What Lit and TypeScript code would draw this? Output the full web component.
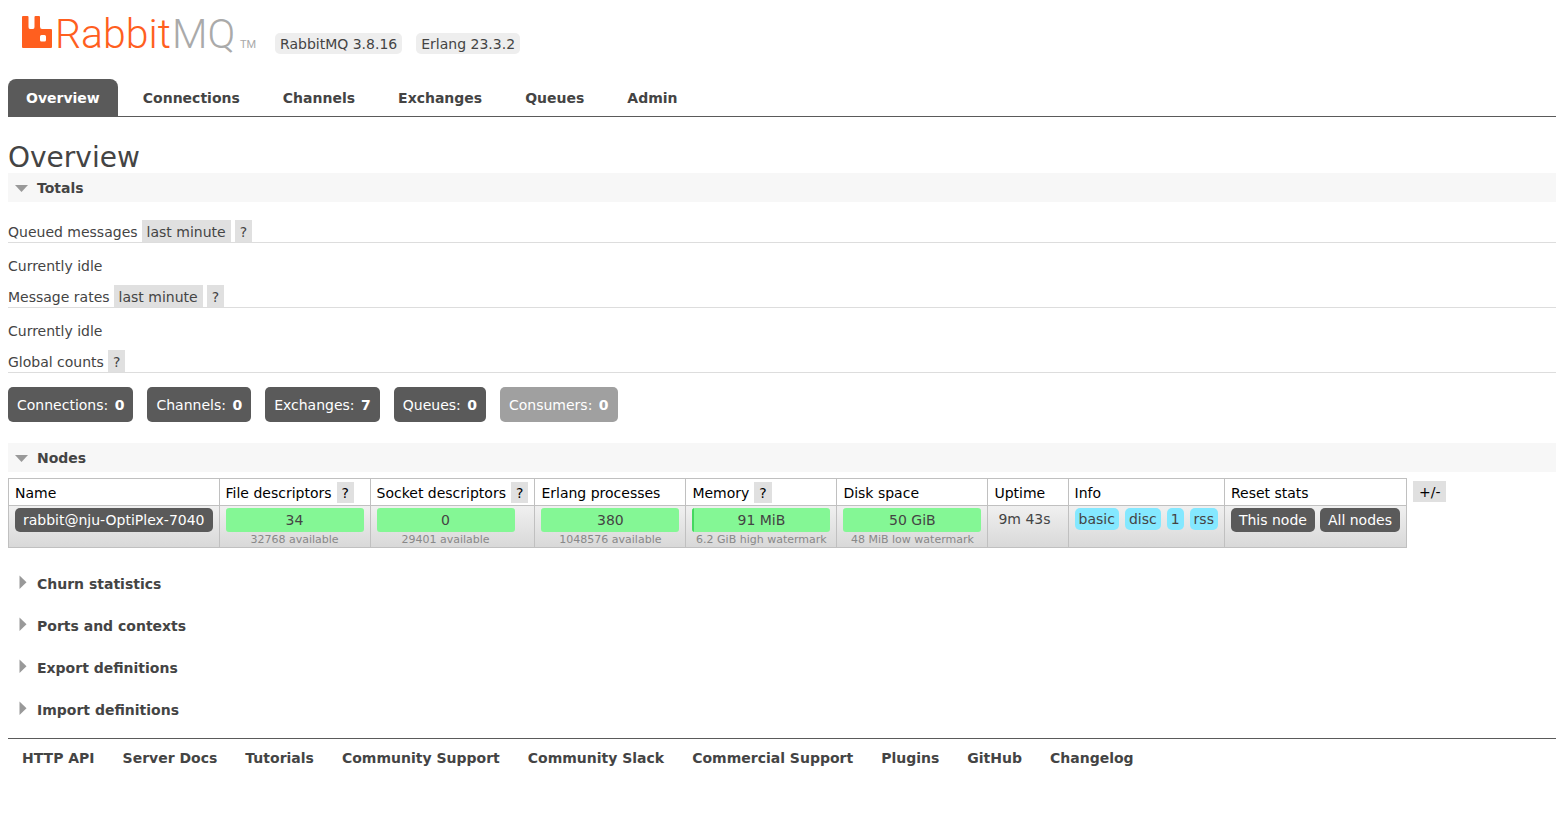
import { LitElement, html, css, svg } from "lit";
import { customElement, property } from "lit/decorators.js";

interface Meter {
  value: string;
  note: string;
  used: number;
}

const TABS = ["Overview", "Connections", "Channels", "Exchanges", "Queues", "Admin"];

const COUNTS = [
  { name: "Connections", count: 0 },
  { name: "Channels", count: 0 },
  { name: "Exchanges", count: 7 },
  { name: "Queues", count: 0 },
  { name: "Consumers", count: 0, disabled: true },
];

const COLUMNS = [
  { label: "Name" },
  { label: "File descriptors", help: true },
  { label: "Socket descriptors", help: true },
  { label: "Erlang processes" },
  { label: "Memory", help: true },
  { label: "Disk space" },
  { label: "Uptime" },
  { label: "Info" },
  { label: "Reset stats" },
];

const METERS: Meter[] = [
  { value: "34", note: "32768 available", used: 0 },
  { value: "0", note: "29401 available", used: 0 },
  { value: "380", note: "1048576 available", used: 0 },
  { value: "91 MiB", note: "6.2 GiB high watermark", used: 1.4 },
  { value: "50 GiB", note: "48 MiB low watermark", used: 0 },
];

const CLOSED_SECTIONS = [
  "Churn statistics",
  "Ports and contexts",
  "Export definitions",
  "Import definitions",
];

const FOOTER_LINKS = [
  "HTTP API",
  "Server Docs",
  "Tutorials",
  "Community Support",
  "Community Slack",
  "Commercial Support",
  "Plugins",
  "GitHub",
  "Changelog",
];

@customElement("section-heading")
export class SectionHeading extends LitElement {
  static styles = css`
    :host {
      display: block;
    }
    .heading {
      margin: 0;
      font-size: 14px;
      line-height: 19px;
    }
    .toggle {
      display: flex;
      align-items: center;
      gap: 9px;
      width: 100%;
      padding: 6px 7px 4px;
      border: 0;
      background: none;
      color: inherit;
      font: inherit;
      font-weight: bold;
      text-align: left;
      cursor: pointer;
    }
    .open {
      background: #f7f7f7;
    }
    .arrow {
      flex: none;
      width: 13px;
      height: 15px;
      overflow: visible;
      fill: #999;
    }
  `;

  @property() label = "";
  @property({ type: Boolean }) open = false;

  render() {
    return html`<h2 class="heading">
      <button class="toggle ${this.open ? "open" : ""}" aria-expanded=${this.open}>
        <svg class="arrow" viewBox="0 0 13 15" aria-hidden="true">
          ${this.open
            ? svg`<path d="M0 4h13L6.5 11z"></path>`
            : svg`<path d="M4.5 -1.500v13.500l7-6.700z"></path>`}
        </svg>
        ${this.label}
      </button>
    </h2>`;
  }
}

@customElement("app-root")
export class AppRoot extends LitElement {
  static styles = css`
    :host {
      display: block;
      padding: 8px 0 0 8px;
      color: #444;
      background: #fff;
      font: 14px/18px Verdana, "DejaVu Sans", sans-serif;
    }
    a {
      color: inherit;
      text-decoration: none;
    }
    button {
      border: 0;
      font: inherit;
      cursor: pointer;
    }
    .brand {
      display: flex;
      align-items: flex-end;
      gap: 14px;
      height: 46px;
      padding-left: 14px;
    }
    .logo {
      display: block;
      margin-right: 4px;
      width: 235px;
      height: 46px;
      overflow: visible;
    }
    .mark,
    .rabbit {
      fill: #ff5f1f;
    }
    .mq,
    .tm {
      fill: #aaa;
    }
    .rabbit,
    .mq {
      font: 300 41px "Roboto", sans-serif;
    }
    .tm {
      font: 11px "Roboto", sans-serif;
    }
    .version {
      padding: 2px 5px 1px;
      border-radius: 5px;
      background: #eee;
    }
    .tabs {
      display: flex;
      gap: 7px;
      margin-top: 25px;
      border-bottom: 1px solid #5a5a5a;
      font-weight: bold;
    }
    .tab {
      padding: 10px 18px 9px;
      border-radius: 8px 8px 0 0;
    }
    .selected {
      background: #5a5a5a;
      color: #fff;
    }
    .title {
      margin: 25px 0 0;
      font-size: 28px;
      font-weight: normal;
      line-height: 31px;
    }
    .stats {
      padding: 18px 0 21px;
    }
    .caption {
      display: flex;
      align-items: flex-end;
      gap: 4px;
      margin: 0;
      padding-top: 2px;
      border-bottom: 1px solid #ddd;
      font-size: 14px;
      font-weight: normal;
      line-height: 20px;
    }
    .chip {
      margin: -2px 0 0;
      padding: 2px 5px 0;
      background: #e0e0e0;
      color: inherit;
    }
    .idle {
      margin: 14px 0 10px;
    }
    .counts {
      display: flex;
      gap: 14px;
      margin-top: 14px;
    }
    .count {
      padding: 9px 9px 8px;
      border-radius: 5px;
      background: #5a5a5a;
      color: #fff;
    }
    .count strong {
      margin-left: 2px;
    }
    .disabled {
      background: #a0a0a0;
    }
    .nodes {
      display: flex;
      align-items: flex-start;
      gap: 6px;
      padding: 6px 0 21px;
    }
    .table {
      border-collapse: collapse;
      white-space: nowrap;
    }
    .table th,
    .table td {
      border: 1px solid #c0c0c0;
      text-align: left;
      vertical-align: top;
    }
    .table th {
      padding: 5px 6px 2px;
      color: #000;
      font-weight: normal;
      line-height: 19px;
    }
    .table td {
      padding: 2px 6px 0;
    }
    .row {
      background: linear-gradient(#f0f0f0, #d8d8d8);
    }
    .label,
    .actions {
      display: flex;
      gap: 5px;
    }
    .action {
      display: inline-block;
      padding: 3px 8px;
      border-radius: 5px;
      background: #5a5a5a;
      color: #fff;
    }
    .meter {
      width: 138px;
      text-align: center;
    }
    .bar {
      display: grid;
      overflow: hidden;
      border-radius: 3px;
      background: #84f795;
    }
    .used,
    .value {
      grid-area: 1 / 1;
    }
    .used {
      background: #44d860;
    }
    .value {
      line-height: 24px;
    }
    .note {
      padding-top: 1px;
      color: #888;
      font-size: 11px;
      line-height: 14px;
    }
    .uptime {
      padding: 2px 11px 2px 4px;
    }
    .tags {
      display: flex;
      gap: 6px;
    }
    .tag {
      padding: 2px 4px;
      border-radius: 5px;
      background: #84e8ff;
    }
    .columns {
      margin-top: 3px;
      padding: 2px 6px 0;
      color: #000;
      line-height: 19px;
    }
    .closed {
      display: grid;
      gap: 13px;
      padding-bottom: 14px;
    }
    .footer {
      display: flex;
      flex-wrap: wrap;
      gap: 28px;
      padding: 10px 14px;
      border-top: 1px solid #5a5a5a;
      font-weight: bold;
    }
  `;

  private help() {
    return html`<button class="chip" aria-label="Help">?</button>`;
  }

  private meter(m: Meter) {
    return html`<td>
      <div class="meter">
        <div class="bar">
          <div class="used" style="width: ${m.used}%"></div>
          <div class="value">${m.value}</div>
        </div>
        <div class="note">${m.note}</div>
      </div>
    </td>`;
  }

  render() {
    return html`
      <header>
        <div class="brand">
          <a href="#/" aria-label="RabbitMQ">
            <svg class="logo" viewBox="0 0 235 46">
              <path
                class="mark"
                fill-rule="evenodd"
                d="M1 8h4.500q1 0 1 1v10q0 2 1.500 2h3q1.500 0 1.500-2V9q0-1 1-1H17q1 0 1 1v9.500q0 2.500 2 2.500h9q1 0 1 1v17q0 1-1 1H1q-1 0-1-1V9q0-1 1-1zM19.500 27q-1.500 0-1.500 1.500v3.500q0 1.500 1.500 1.500h3q1.500 0 1.500-1.500v-3.500q0-1.500-1.500-1.500z"
              ></path>
              <text class="rabbit" x="33" y="40">Rabbit</text>
              <text class="mq" x="150" y="40">MQ</text>
              <text class="tm" x="218" y="40">TM</text>
            </svg>
          </a>
          <span class="version">RabbitMQ 3.8.16</span>
          <span class="version">Erlang 23.3.2</span>
        </div>
        <nav class="tabs">
          ${TABS.map(
            (t, i) => html`<a class="tab ${i === 0 ? "selected" : ""}" href="#/${t.toLowerCase()}">${t}</a>`
          )}
        </nav>
      </header>
      <main>
        <h1 class="title">Overview</h1>
        <section-heading label="Totals" open></section-heading>
        <div class="stats">
          <h3 class="caption">Queued messages <button class="chip">last minute</button>${this.help()}</h3>
          <p class="idle">Currently idle</p>
          <h3 class="caption">Message rates <button class="chip">last minute</button>${this.help()}</h3>
          <p class="idle">Currently idle</p>
          <h3 class="caption">Global counts ${this.help()}</h3>
          <div class="counts">
            ${COUNTS.map(
              (c) => html`<a class="count ${c.disabled ? "disabled" : ""}" href="#/${c.name.toLowerCase()}"
                >${c.name}: <strong>${c.count}</strong></a
              >`
            )}
          </div>
        </div>
        <section-heading label="Nodes" open></section-heading>
        <div class="nodes">
          <table class="table">
            <thead>
              <tr>
                ${COLUMNS.map(
                  (c) => html`<th scope="col"><div class="label">${c.label}${c.help ? this.help() : ""}</div></th>`
                )}
              </tr>
            </thead>
            <tbody>
              <tr class="row">
                <td><a class="action" href="#/nodes/rabbit">rabbit@nju-OptiPlex-7040</a></td>
                ${METERS.map((m) => this.meter(m))}
                <td><div class="uptime">9m 43s</div></td>
                <td>
                  <div class="tags">
                    ${["basic", "disc", "1", "rss"].map((t) => html`<span class="tag">${t}</span>`)}
                  </div>
                </td>
                <td>
                  <div class="actions">
                    <button class="action">This node</button>
                    <button class="action">All nodes</button>
                  </div>
                </td>
              </tr>
            </tbody>
          </table>
          <button class="chip columns">+/-</button>
        </div>
        <div class="closed">
          ${CLOSED_SECTIONS.map((s) => html`<section-heading label=${s}></section-heading>`)}
        </div>
      </main>
      <footer class="footer">
        ${FOOTER_LINKS.map((l) => html`<a href="#/">${l}</a>`)}
      </footer>
    `;
  }
}
